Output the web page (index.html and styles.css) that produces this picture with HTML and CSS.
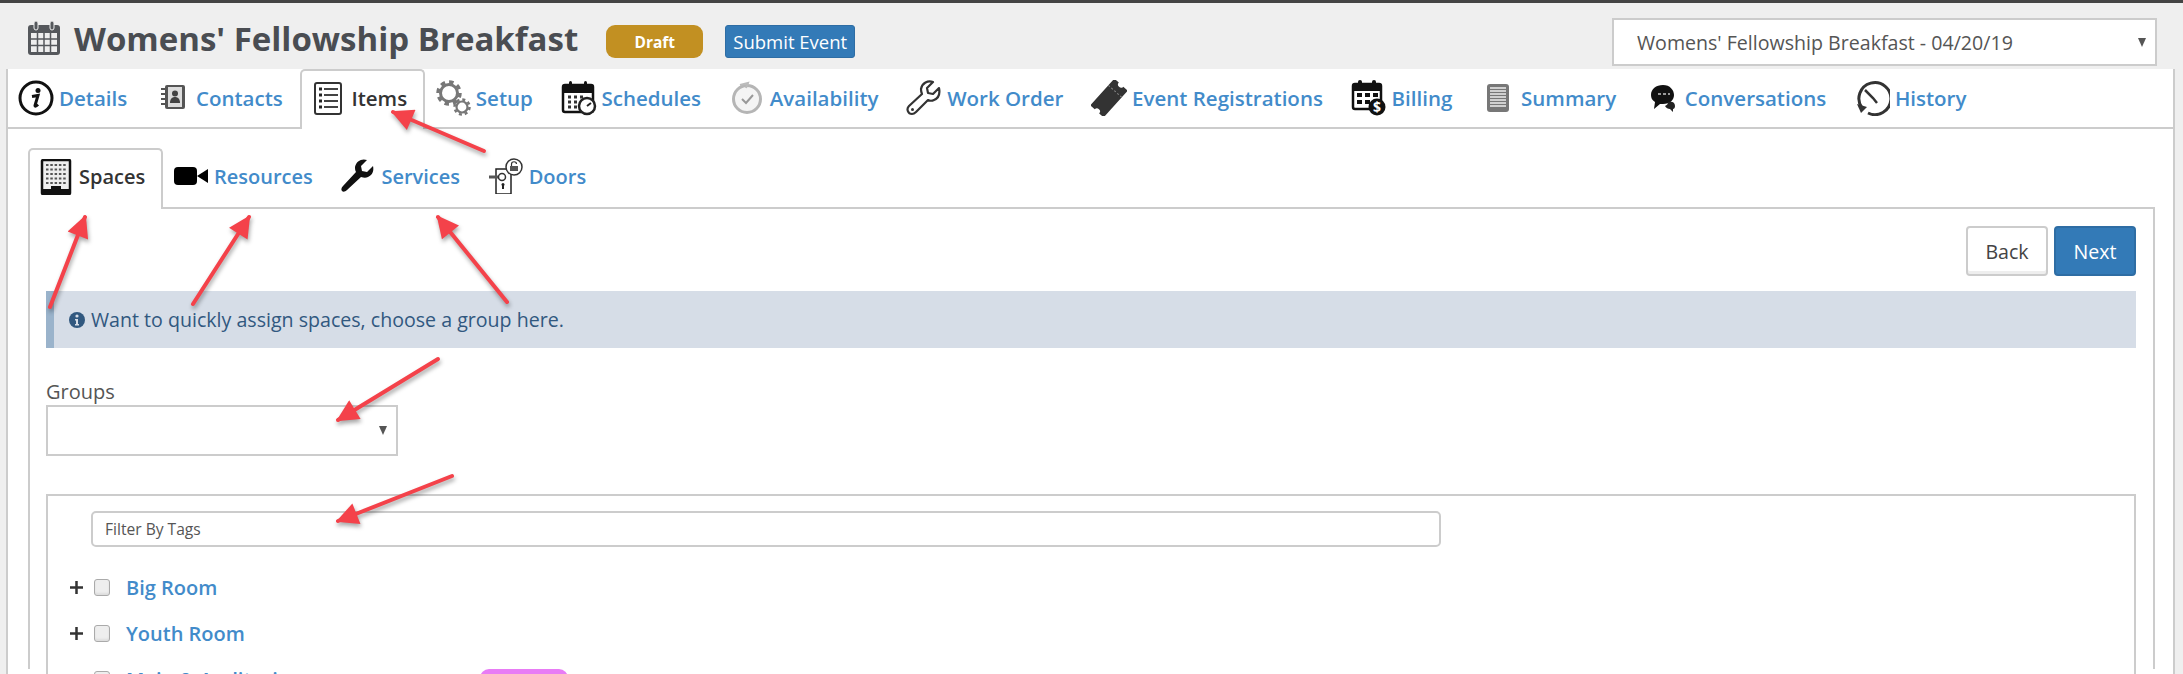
FILE: index.html
```html
<!DOCTYPE html>
<html lang="en">
<head>
  <meta charset="UTF-8" />
  <title>Womens' Fellowship Breakfast</title>
  <link rel="stylesheet" href="styles.css">
</head>
<body>

  <!-- Event header -->
  <header class="event-header">
    <svg class="title-icon" viewBox="0 0 34 36" width="34" height="36">
      <rect x="1" y="5" width="32" height="30" rx="3" fill="#55585c"/>
      <rect x="4" y="13" width="26" height="19" fill="#eee"/>
      <path d="M4 19h26M4 25.500h26M10.500 13v19M17 13v19M23.500 13v19" stroke="#55585c" stroke-width="1.500"/>
      <rect x="7" y="1" width="4" height="9" rx="2" fill="#55585c" stroke="#eee"/>
      <rect x="23" y="1" width="4" height="9" rx="2" fill="#55585c" stroke="#eee"/>
    </svg>
    <h1 class="event-title">Womens' Fellowship Breakfast</h1>
    <span class="badge-draft">Draft</span>
    <a class="btn-submit" href="#">Submit Event</a>
    <div class="select select-event">
      <span>Womens' Fellowship Breakfast - 04/20/19</span>
      <i class="caret"></i>
    </div>
  </header>

  <div class="panel">
    <!-- Main tabs -->
    <nav class="tabs tabs-main">
      <a class="tab" href="#">
        <svg viewBox="0 0 36 36" width="36" height="36"><circle cx="18" cy="18" r="16" fill="none" stroke="#111" stroke-width="3"/><circle cx="20" cy="10.500" r="2.500" fill="#111"/><path d="M14 16.500l6-1-3 10c0 1 1 1 3-1" fill="none" stroke="#111" stroke-width="3"/></svg>
        Details
      </a>
      <a class="tab" href="#">
        <svg viewBox="0 0 36 36" width="36" height="36"><rect x="10" y="5" width="20" height="24" rx="2" fill="#555"/><rect x="13" y="7" width="14" height="20" fill="#ddd"/><circle cx="20" cy="13.500" r="3" fill="#444"/><path d="M15 23c0-4 2-6 5-6s5 2 5 6z" fill="#444"/><path d="M6 9h6M6 14h6M6 19h6M6 24h6" stroke="#555" stroke-width="2"/></svg>
        Contacts
      </a>
      <a class="tab active" href="#">
        <svg viewBox="0 0 36 36" width="36" height="36"><rect x="5" y="3" width="26" height="31" rx="2" fill="none" stroke="#333" stroke-width="2"/><path d="M9 9h3M9 15h3M9 21h3M9 27h3" stroke="#222" stroke-width="3"/><path d="M14 9h14M14 15h14M14 21h14M14 27h14" stroke="#444" stroke-width="2"/></svg>
        Items
      </a>
      <a class="tab" href="#">
        <svg viewBox="0 0 36 36" width="36" height="36"><g fill="none" stroke="#777"><circle cx="14" cy="13" r="11" stroke-width="3.500" stroke-dasharray="4.500 4.100"/><circle cx="14" cy="13" r="8.500" stroke-width="3"/><circle cx="27" cy="27" r="7.500" stroke-width="2.500" stroke-dasharray="3 2.900"/><circle cx="27" cy="27" r="5.500" stroke-width="2.200"/></g></svg>
        Setup
      </a>
      <a class="tab" href="#">
        <svg viewBox="0 0 36 36" width="36" height="36"><rect x="2" y="5" width="30" height="27" rx="2" fill="#fff" stroke="#111" stroke-width="2.500"/><rect x="2" y="5" width="30" height="8" fill="#111"/><rect x="8" y="1" width="3" height="8" rx="1.500" fill="#111"/><rect x="23" y="1" width="3" height="8" rx="1.500" fill="#111"/><path d="M7 17h3M13 17h3M19 17h3M7 22h3M13 22h3M7 27h3M13 27h3" stroke="#333" stroke-width="3"/><circle cx="26" cy="26" r="8" fill="#fff" stroke="#222" stroke-width="2.500"/><path d="M26 26l4-3" stroke="#222" stroke-width="2"/></svg>
        Schedules
      </a>
      <a class="tab" href="#">
        <svg viewBox="0 0 36 36" width="36" height="36"><circle cx="18" cy="19" r="13.500" fill="#f4f4f4" stroke="#b5b5b5" stroke-width="3"/><path d="M13 19l4 4 7-8" fill="none" stroke="#999" stroke-width="2"/><path d="M11 5l8-2-2 5" fill="none" stroke="#bbb" stroke-width="2"/></svg>
        Availability
      </a>
      <a class="tab" href="#">
        <svg viewBox="0 0 36 36" width="36" height="36"><path d="M33 8l-6 6-5-1-1-5 6-6C22 0 16 3 15 9c0 2 0 3 1 5L3 26c-3 3-1 8 3 8 1 0 3-1 4-2L22 20c2 1 4 1 6 0 5-2 6-7 5-12z" fill="#fff" stroke="#333" stroke-width="2.200" stroke-linejoin="round"/><circle cx="6.500" cy="29.500" r="1.500" fill="#333"/></svg>
        Work Order
      </a>
      <a class="tab" href="#">
        <svg viewBox="0 0 36 36" width="36" height="36"><g transform="rotate(-48 18 18)"><path d="M0 9h36v6a3 3 0 0 0 0 6v6H0v-6a3 3 0 0 0 0-6z" fill="#333"/><path d="M27 9v18" stroke="#888" stroke-width="1" stroke-dasharray="2 2"/></g></svg>
        Event Registrations
      </a>
      <a class="tab" href="#">
        <svg viewBox="0 0 36 36" width="36" height="36"><rect x="2" y="4" width="28" height="25" rx="2" fill="#fff" stroke="#111" stroke-width="2.500"/><rect x="2" y="4" width="28" height="7" fill="#111"/><rect x="7" y="0" width="4" height="7" rx="2" fill="#111"/><rect x="21" y="0" width="4" height="7" rx="2" fill="#111"/><path d="M6 15h5M14 15h5M22 15h5M6 22h5M14 22h5" stroke="#111" stroke-width="4"/><circle cx="26" cy="27" r="8.500" fill="#111"/><text class="dollar" x="26" y="32" text-anchor="middle">$</text></svg>
        Billing
      </a>
      <a class="tab" href="#">
        <svg viewBox="0 0 36 36" width="36" height="36"><rect x="7" y="4" width="22" height="28" rx="3" fill="#777"/><path d="M10 8h16M10 11h16M10 14h16M10 17h16M10 20h16M10 23h16M10 26h16" stroke="#eee" stroke-width="1.500"/></svg>
        Summary
      </a>
      <a class="tab" href="#">
        <svg viewBox="0 0 36 36" width="36" height="36"><path d="M19 5c-7 0-12 4-12 10 0 3 1 5 4 7l-1 7 6-5h3c7 0 11-4 11-9s-4-10-11-10z" fill="#111"/><path d="M14 14h3M19 14h3M24 14h2" stroke="#999" stroke-width="2"/><path d="M24 22c4-1 7 0 7 4 0 2-1 3-2 3v3l-3-3c-2 0-4-1-5-3 2-1 3-2 3-4z" fill="#222"/></svg>
        Conversations
      </a>
      <a class="tab" href="#">
        <svg viewBox="0 0 36 36" width="36" height="36"><path d="M8 28a16 16 0 1 1 6 5" fill="none" stroke="#333" stroke-width="3"/><path d="M3 24l4 9 6-6z" fill="#333"/><path d="M11 10l8 8 4 5" fill="none" stroke="#333" stroke-width="2.500"/></svg>
        History
      </a>
    </nav>

    <!-- Item tabs -->
    <nav class="tabs tabs-items">
      <a class="tab active" href="#">
        <svg viewBox="0 0 36 36" width="36" height="36"><rect x="4" y="1" width="28" height="34" rx="1" fill="#eee" stroke="#111" stroke-width="2.500"/><path d="M8 6h20M8 10.500h20M8 15h20M8 19.500h20M8 24h20" stroke="#555" stroke-width="2.200" stroke-dasharray="2.500 1.800"/><path d="M5 30h26v4H5zM13 27h10v5H13z" fill="#111"/></svg>
        Spaces
      </a>
      <a class="tab" href="#">
        <svg viewBox="0 0 36 36" width="36" height="36"><rect x="1" y="9" width="23" height="18" rx="4" fill="#000"/><path d="M24 18l11-7v14z" fill="#000"/></svg>
        Resources
      </a>
      <a class="tab" href="#">
        <svg viewBox="0 0 36 36" width="36" height="36"><path d="M33 8l-6 6-5-1-1-5 6-6C22 0 16 3 15 9c0 2 0 3 1 5L3 28c-2 2-2 4-1 5s3 1 5-1L21 19c3 1 5 1 7 0 5-2 6-7 5-11z" fill="#111"/></svg>
        Services
      </a>
      <a class="tab" href="#">
        <svg viewBox="0 0 36 36" width="36" height="36"><rect x="8" y="11" width="15" height="25" fill="#fff" stroke="#222" stroke-width="1.500"/><path d="M1 19h12" stroke="#555" stroke-width="3"/><circle cx="14" cy="19" r="3.500" fill="#fff" stroke="#333" stroke-width="1.500"/><path d="M15 26v5" stroke="#222" stroke-width="2"/><circle cx="15" cy="26.500" r="1.500" fill="#222"/><circle cx="26" cy="9" r="8" fill="#fff" stroke="#333" stroke-width="1.500"/><rect x="22" y="8" width="8" height="5" fill="#555"/><path d="M23.500 8V6c0-3 5-3 5 0" fill="none" stroke="#333" stroke-width="1.200"/></svg>
        Doors
      </a>
    </nav>

    <section class="pane">
      <div class="wizard-buttons">
        <a class="btn btn-back" href="#">Back</a>
        <a class="btn btn-next" href="#">Next</a>
      </div>

      <div class="alert">
        <svg viewBox="0 0 16 16" width="16" height="16"><circle cx="8" cy="8" r="8" fill="#31587f"/><circle cx="8" cy="4" r="1.600" fill="#d6dde7"/><path d="M6 7h3v5h1v1.500H6V12h1V8.500H6z" fill="#d6dde7"/></svg>
        Want to quickly assign spaces, choose a group here.
      </div>

      <label class="field-label">Groups</label>
      <div class="select select-groups"><i class="caret"></i></div>

      <div class="tree-box">
        <input class="tag-filter" type="text" placeholder="Filter By Tags" />
        <ul class="tree">
          <li class="tree-row">
            <svg class="plus" viewBox="0 0 13 13" width="13" height="13"><path d="M6.500 0v13M0 6.500h13" stroke="#333" stroke-width="2.500"/></svg>
            <input class="tree-check" type="checkbox" />
            <a class="tree-name" href="#">Big Room</a>
          </li>
          <li class="tree-row">
            <svg class="plus" viewBox="0 0 13 13" width="13" height="13"><path d="M6.500 0v13M0 6.500h13" stroke="#333" stroke-width="2.500"/></svg>
            <input class="tree-check" type="checkbox" />
            <a class="tree-name" href="#">Youth Room</a>
          </li>
          <li class="tree-row tree-row-leaf">
            <input class="tree-check" type="checkbox" />
            <a class="tree-name" href="#">Main &amp; Auditorium</a>
            <span class="tag-pill"></span>
          </li>
        </ul>
      </div>
    </section>
  </div>

  <!-- Annotation arrows drawn over the screenshot -->
  <svg class="arrows" viewBox="0 0 2183 674" width="2183" height="674">
    <defs>
      <marker id="head" viewBox="0 0 10 10" refX="9" refY="5" markerWidth="6" markerHeight="5.500" orient="auto">
        <path d="M0 0L10 5L0 10z" fill="#f4424a"/>
      </marker>
    </defs>
    <g class="arrow-lines">
      <line x1="484" y1="151" x2="393" y2="112" marker-end="url(#head)"/>
      <line x1="50" y1="307" x2="85" y2="217" marker-end="url(#head)"/>
      <line x1="193" y1="304" x2="249" y2="217" marker-end="url(#head)"/>
      <line x1="507" y1="302" x2="438" y2="217" marker-end="url(#head)"/>
      <line x1="438" y1="359" x2="338" y2="420" marker-end="url(#head)"/>
      <line x1="452" y1="476" x2="338" y2="521" marker-end="url(#head)"/>
    </g>
  </svg>

</body>
</html>
```

FILE: styles.css
```css
* {
  box-sizing: border-box;
}

html, body {
  margin: 0;
  padding: 0;
  height: 674px;
  overflow: hidden;
}

body {
  position: relative;
  background: #efefef;
  border-top: 3px solid #444;
  font-family: 'Open Sans', sans-serif;
  color: #555;
}

a {
  text-decoration: none;
}

/* header */
.event-header {
  display: flex;
  align-items: center;
  height: 66px;
  padding: 11px 26px 0 27px;
}

.title-icon {
  flex: none;
  margin: 0 13px 7px 0;
}

.event-title {
  margin: 0 28px 6px 0;
  font-size: 33px;
  font-weight: 700;
  color: #4a4d52;
  white-space: nowrap;
}

.badge-draft {
  display: flex;
  align-items: center;
  justify-content: center;
  width: 97px;
  height: 33px;
  margin-right: 22px;
  border-radius: 9px;
  background: #c29022;
  color: #fff;
  font-size: 15.5px;
  font-weight: 700;
}

.btn-submit {
  display: flex;
  align-items: center;
  justify-content: center;
  width: 130px;
  height: 33px;
  border: 1px solid #2e6da4;
  border-radius: 3px;
  background: #337ab7;
  color: #fff;
  font-size: 18.5px;
}

.select {
  display: flex;
  align-items: center;
  justify-content: space-between;
  border: 2px solid #ccc;
  background: #fff;
}

.select-event {
  width: 545px;
  height: 48px;
  margin-left: auto;
  margin-top: 1px;
  padding: 0 9px 0 23px;
  font-size: 19.6px;
  color: #555;
}

.caret {
  width: 0;
  height: 0;
  margin-left: auto;
  border-left: 4.5px solid transparent;
  border-right: 4.5px solid transparent;
  border-top: 9px solid #555;
}

/* panel and tabs */
.panel {
  margin: 0 8px 0 6px;
  height: 605px;
  border-left: 2px solid #ccc;
  border-right: 2px solid #ccc;
  background: #fff;
}

.tabs {
  display: flex;
  border-bottom: 2px solid #ccc;
}

.tabs-main {
  height: 60px;
}

.tabs-items {
  height: 61px;
  margin: 19px 18px 0 20px;
}

.tab {
  display: flex;
  align-items: center;
  gap: 5px;
  height: 100%;
  padding: 0 17.7px 0 10px;
  font-size: 20.5px;
  font-weight: 600;
  color: #428bca;
  white-space: nowrap;
}

.tab svg {
  flex: none;
}

.tab.active {
  height: calc(100% + 2px);
  padding: 0 15.7px 4px 8px;
  border: 2px solid #ccc;
  border-bottom: none;
  border-radius: 5px 5px 0 0;
  background: #fff;
  color: #333;
}

.tabs-items .tab {
  padding-bottom: 3px;
  font-size: 20px;
}

.tabs-items .tab.active {
  padding-bottom: 6px;
}

.dollar {
  font-family: 'Open Sans', sans-serif;
  font-size: 14px;
  font-weight: 700;
  fill: #fff;
}

/* tab content */
.pane {
  height: 460px;
  margin: 0 18px 0 20px;
  padding: 17px 17px 0 16px;
  border-left: 2px solid #ccc;
  border-right: 2px solid #ccc;
}

.wizard-buttons {
  display: flex;
  justify-content: flex-end;
  gap: 6px;
}

.btn {
  display: flex;
  align-items: center;
  justify-content: center;
  width: 82px;
  height: 50px;
  border-radius: 4px;
  font-size: 19.6px;
}

.btn-back {
  border: 2px solid #ccc;
  background: #fff;
  box-shadow: inset 0 -3px 0 #eee;
  color: #444;
}

.btn-next {
  border: 2px solid #2e6da4;
  background: #337ab7;
  color: #fff;
}

.alert {
  display: flex;
  align-items: center;
  gap: 6px;
  height: 57px;
  margin-top: 15px;
  padding: 0 15px;
  border-left: 8px solid #9ab3cb;
  background: #d6dde7;
  color: #31587f;
  font-size: 19.6px;
}

.field-label {
  display: block;
  margin-top: 31px;
  line-height: 26px;
  font-size: 20px;
  color: #555;
}

.select-groups {
  width: 352px;
  height: 51px;
  padding: 0 9px;
}

.tree-box {
  height: 260px;
  margin-top: 38px;
  border: 2px solid #ccc;
}

.tag-filter {
  display: block;
  width: 1350px;
  height: 36px;
  margin: 15px 0 0 43px;
  padding: 0 12px;
  border: 2px solid #ccc;
  border-radius: 5px;
  font-family: 'Open Sans', sans-serif;
  font-size: 15.6px;
  color: #555;
}

.tag-filter::placeholder {
  color: #555;
  opacity: 1;
}

.tree {
  list-style: none;
  margin: 0;
  padding: 17px 0 0 22px;
}

.tree-row {
  display: flex;
  align-items: center;
  height: 46px;
}

.tree-row-leaf {
  padding-left: 24px;
}

.plus {
  flex: none;
  margin-right: 11px;
}

.tree-check {
  appearance: none;
  flex: none;
  width: 16px;
  height: 17px;
  margin: 0 16px 0 0;
  border: 1px solid #aaa;
  border-radius: 3px;
  background: #eee;
  box-shadow: inset 0 -2px 2px #ddd;
}

.tree-name {
  font-size: 20px;
  font-weight: 600;
  color: #428bca;
  white-space: nowrap;
}

.tag-pill {
  width: 88px;
  height: 20px;
  margin-left: 170px;
  border-radius: 9px;
  background: #e87cf5;
}

/* annotations */
.arrows {
  position: absolute;
  top: -3px;
  left: 0;
  pointer-events: none;
  filter: drop-shadow(1px 3px 2px rgba(0, 0, 0, 0.35));
}

.arrow-lines line {
  stroke: #f4424a;
  stroke-width: 4;
  stroke-linecap: round;
}
```
